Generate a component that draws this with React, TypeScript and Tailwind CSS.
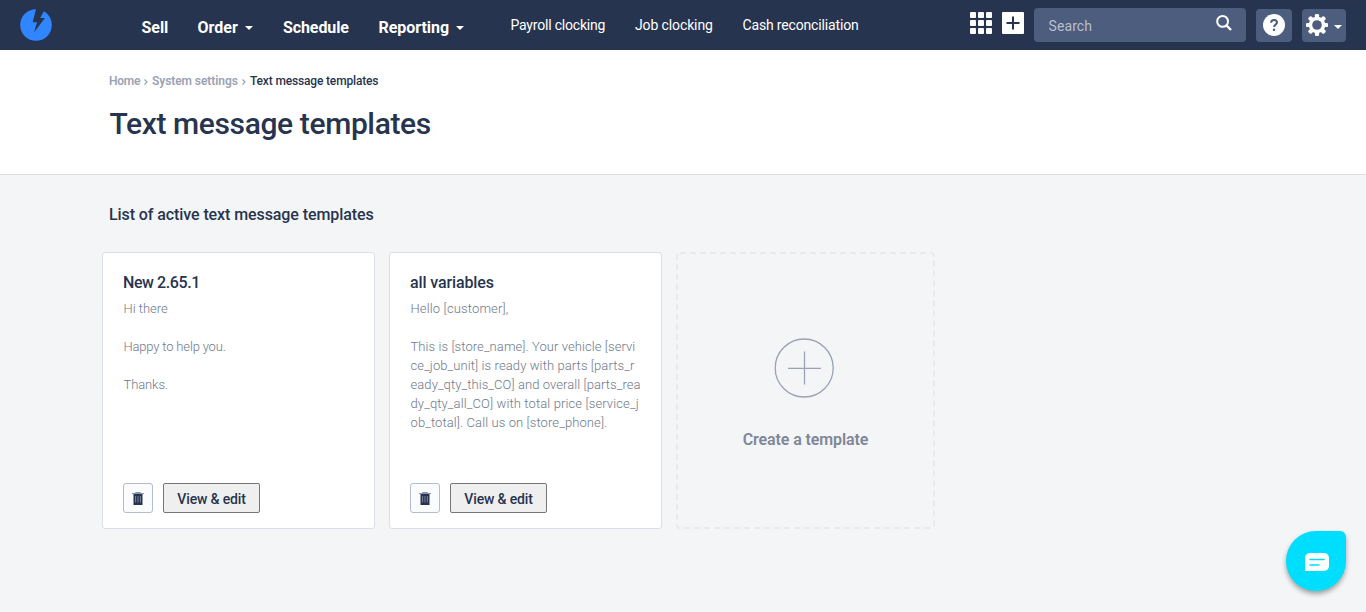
import React from "react";

function Caret({ className = "" }: { className?: string }) {
  return (
    <svg className={className} width="8" height="4" viewBox="0 0 8 4">
      <path d="M0 0h8L4 4z" fill="#fff" />
    </svg>
  );
}

function Logo() {
  return (
    <svg className="ml-5 mt-[9px] shrink-0" width="32" height="32" viewBox="0 0 32 32">
      <circle cx="16" cy="16" r="15.8" fill="#2f86ff" />
      <path d="M16.3 -1L12.7 13.2H17L14.2 23.3L24.9 9H20.2L24.3 1.5V-1Z" fill="#27344f" />
    </svg>
  );
}

function GridIcon() {
  return (
    <svg className="mt-3" width="22" height="22" viewBox="0 0 22 22" fill="#fff">
      {[0, 8, 16].map((y) => [0, 8, 16].map((x) => <rect key={`${x}-${y}`} x={x} y={y} width="6" height="6" rx="1" />))}
    </svg>
  );
}

function PlusSquare() {
  return (
    <svg className="ml-2.5 mt-3" width="22" height="22" viewBox="0 0 22 22">
      <rect width="22" height="22" rx="1" fill="#fff" />
      <path d="M11 4.5v13M4.5 11h13" stroke="#27344f" strokeWidth="2" />
    </svg>
  );
}

function Header() {
  return (
    <header className="flex h-[50px] items-start bg-[#27344f] text-white">
      <Logo />
      <nav className="ml-[89.5px] mt-[17px] flex h-[22px] items-center text-[16px] leading-[22px] font-bold whitespace-nowrap">
        <span className="w-[56px] tracking-[-0.05px]">Sell</span>
        <span className="flex w-[85.5px] items-center">
          <span className="w-[47px]">Order</span>
          <Caret />
        </span>
        <span className="w-[95.5px] tracking-[-0.1px]">Schedule</span>
        <span className="flex w-[132px] items-center">
          <span className="w-[77.5px] tracking-[-0.04px]">Reporting</span>
          <Caret />
        </span>
      </nav>
      <nav className="mt-[15px] flex h-5 items-center text-[14px] leading-5 whitespace-nowrap">
        <span className="w-[124.5px] tracking-[-0.2px]">Payroll clocking</span>
        <span className="w-[107.5px] tracking-[-0.12px]">Job clocking</span>
        <span className="tracking-[-0.16px]">Cash reconciliation</span>
      </nav>
      <div className="mr-5 ml-auto flex items-start">
        <GridIcon />
        <PlusSquare />
        <div className="mt-2 ml-2.5 flex h-[34px] w-[212px] items-start justify-between rounded-[4px] bg-[#4d5d7e] pr-[14px] pl-[14.5px]">
          <span className="mt-2 text-[14px] leading-5 tracking-[0.1px] text-[#b7bfcc]">Search</span>
          <svg className="mt-[7px]" width="16" height="16" viewBox="0 0 16 16" fill="none" stroke="#fff">
            <circle cx="6.6" cy="6.4" r="5.4" strokeWidth="2" />
            <path d="M10.4 10.4L15 15" strokeWidth="2.4" />
          </svg>
        </div>
        <div className="mt-[9px] ml-2.5 flex h-[33px] w-9 items-center justify-center rounded-[4px] bg-[#4d5d7e]">
          <span className="mb-px flex size-[22px] items-center justify-center rounded-full bg-white">
            <svg width="22" height="22" viewBox="0 0 22 22" fill="none" stroke="#4d5d7e" strokeWidth="2">
              <path d="M8.1 8.8C8.1 6.9 9.3 5.9 11 5.9s3 1 3 2.5c0 2.1-2.9 2.2-2.9 4.7" />
              <path d="M11 14.7v2.2" strokeWidth="2.2" />
            </svg>
          </span>
        </div>
        <div className="mt-[9px] ml-2.5 flex h-[33px] w-11 items-start rounded-[4px] bg-[#4d5d7e] pl-1">
          <svg className="mt-[5px]" width="22" height="22" viewBox="0 0 22 22">
            <g fill="#fff">
              <circle cx="11" cy="11" r="8.3" />
              {[0, 45, 90, 135].map((a) => (
                <rect key={a} x="8.9" y="0" width="4.2" height="22" rx="1.2" transform={`rotate(${a} 11 11)`} />
              ))}
            </g>
            <circle cx="11" cy="11" r="4.8" fill="#4d5d7e" />
          </svg>
          <Caret className="mt-4 ml-[6px]" />
        </div>
      </div>
    </header>
  );
}

function TrashIcon() {
  return (
    <svg width="12" height="13" viewBox="0 0 12 13">
      <path d="M3.5 1.5V.5h5v1M0 1.5h12" stroke="#8d96a8" strokeWidth="1" fill="none" />
      <path d="M1.500 2h9v11h-9z" fill="#27344f" />
      <path d="M3.6 4v6.500M6 4v6.500M8.400 4v6.500" stroke="#8f98a9" strokeWidth=".8" />
    </svg>
  );
}

function TemplateCard({ title, children }: { title: React.ReactNode; children: React.ReactNode }) {
  return (
    <article className="flex h-[277px] w-[273px] flex-col rounded-[3px] border border-[#dbdfe7] bg-white px-5 pt-5 pb-[15px]">
      <h3 className="text-[16px] leading-5 font-medium text-[#27344f]">{title}</h3>
      <div className="mt-[6px] ml-[0.5px] flex flex-col text-[13px] leading-[19px] font-light whitespace-nowrap text-[#6e788c]">{children}</div>
      <div className="mt-auto flex gap-2.5">
        <button className="flex size-[30px] items-center justify-center rounded-[3px] border border-[#b5bccd] bg-[#fafbfd] pt-px">
          <TrashIcon />
        </button>
        <button className="h-[30px] w-[97px] rounded-[2px] border border-[#767676] bg-[#efefef] pt-px text-[14px] leading-5 font-medium tracking-[-0.16px] text-[#27344f]">
          View &amp; edit
        </button>
      </div>
    </article>
  );
}

function Chevron() {
  return (
    <svg className="mt-[6px] w-[9px]" width="9" height="6" viewBox="0 0 9 6">
      <path d="M1.5 .5L4 3L1.5 5.5" fill="none" stroke="#9aa2b5" strokeWidth="1.2" />
    </svg>
  );
}

export default function App() {
  return (
    <div className="relative flex h-[612px] w-[1366px] flex-col overflow-hidden bg-[#f4f5f7] font-[Roboto,sans-serif]">
      <Header />
      <section className="h-[125px] border-b border-[#dcdfe4] bg-white pl-[109px]">
        <div className="flex h-4 pt-[23px] text-[12px] leading-4 font-semibold whitespace-nowrap text-[#9aa2b5]">
          <span className="w-[34px] tracking-[-0.25px]">Home</span>
          <Chevron />
          <span className="w-[89px] tracking-[-0.07px]">System settings</span>
          <Chevron />
          <span className="font-medium tracking-[-0.16px] text-[#27344f]">Text message templates</span>
        </div>
        <h1 className="mt-[33px] ml-[0.5px] text-[30px] leading-9 font-medium tracking-[-0.38px] whitespace-nowrap text-[#27344f]">
          Text message templates
        </h1>
      </section>
      <main className="flex flex-col pl-[102px]">
        <h2 className="mt-[30px] ml-[7px] text-[16px] leading-5 font-medium tracking-[-0.09px] whitespace-nowrap text-[#27344f]">
          List of active text message templates
        </h2>
        <div className="mt-[27px] flex gap-3.5">
          <TemplateCard title={<span className="tracking-[-0.42px]">New 2.65.1</span>}>
            <span>Hi there</span>
            <span className="mt-[19px] tracking-[-0.17px]">Happy to help you.</span>
            <span className="mt-[19px] tracking-[-0.1px]">Thanks.</span>
          </TemplateCard>
          <TemplateCard title={<span className="tracking-[-0.12px]">all variables</span>}>
            <span className="tracking-[0.15px]">Hello [customer],</span>
            <span className="mt-[19px] tracking-[0.08px]">This is [store_name]. Your vehicle [servi</span>
            <span className="tracking-[0.1px]">ce_job_unit] is ready with parts [parts_r</span>
            <span className="tracking-[0.08px]">eady_qty_this_CO] and overall [parts_rea</span>
            <span className="tracking-[0.12px]">dy_qty_all_CO] with total price [service_j</span>
            <span className="tracking-[0.1px]">ob_total]. Call us on [store_phone].</span>
          </TemplateCard>
          <div className="relative flex h-[277px] w-[259px] flex-col items-center">
            <svg className="absolute inset-0" width="259" height="277" viewBox="0 0 259 277" fill="none">
              <rect x="1" y="1" width="257" height="275" rx="3" stroke="#e8eaed" strokeWidth="2" strokeDasharray="6 4" />
            </svg>
            <svg className="mt-[86px] mr-[3px]" width="60" height="60" viewBox="0 0 60 60" fill="none" stroke="#9aa3b5">
              <circle cx="30.2" cy="30" r="29" strokeWidth="1.3" />
              <path d="M30.500 13.500v33M14 30.300h33" strokeWidth="1.3" />
            </svg>
            <span className="mt-[32px] text-[16px] leading-5 font-semibold tracking-[-0.1px] whitespace-nowrap text-[#7e8798]">
              Create a template
            </span>
          </div>
        </div>
      </main>
      <button className="absolute top-[531px] left-[1286px] flex size-[60px] items-center justify-center rounded-[30px_6px_30px_30px] bg-[#00deff] pt-[2px] pl-[2px] shadow-[0_3px_5px_rgba(0,0,0,0.35)]">
        <svg width="24" height="18" viewBox="0 0 24 18">
          <path d="M5 0h14a5 5 0 0 1 5 5v8a5 5 0 0 1-5 5H0V5a5 5 0 0 1 5-5z" fill="#fff" />
          <path d="M5 6.500h14M5 12h9" stroke="#00deff" strokeWidth="1.600" strokeLinecap="round" />
        </svg>
      </button>
    </div>
  );
}
